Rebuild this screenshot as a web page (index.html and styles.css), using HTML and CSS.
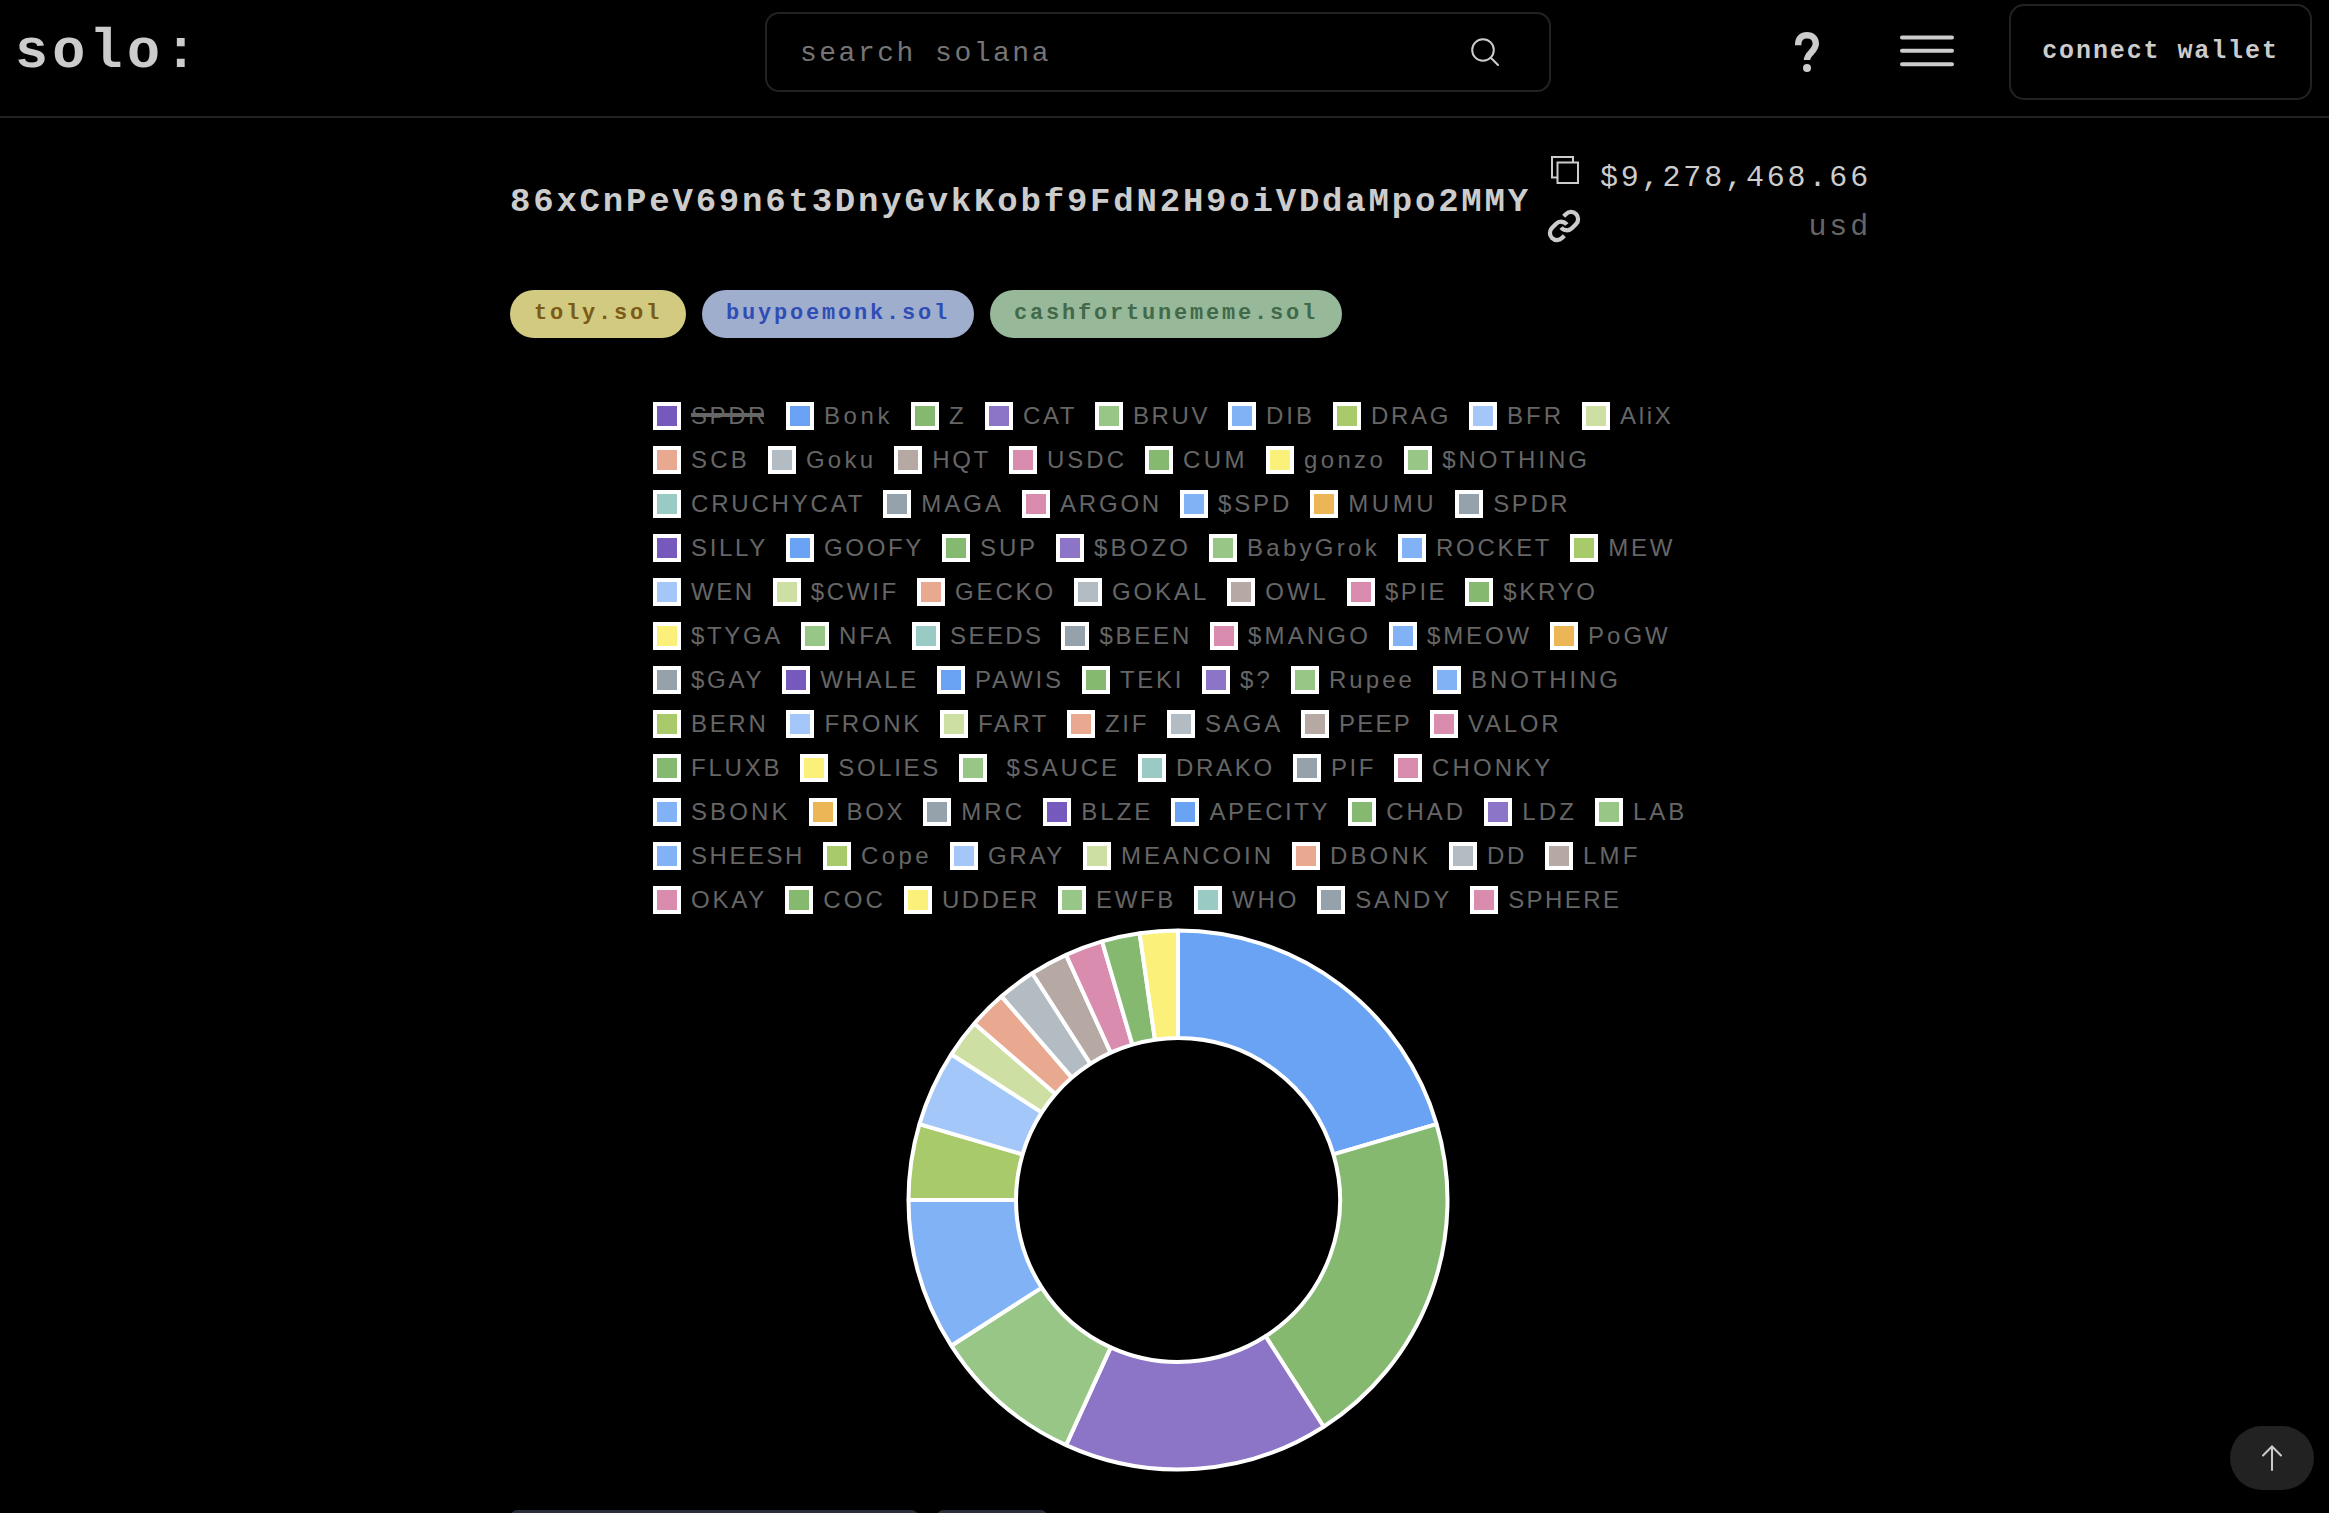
FILE: index.html
```html
<!DOCTYPE html>
<html lang="en">
<head>
<meta charset="utf-8">
<title>solo:</title>
<link rel="stylesheet" href="styles.css">
</head>
<body>
<header class="topbar">
  <a class="logo">solo:</a>
  <div class="search">
    <span class="search-text">search solana</span>
    <svg class="search-icon" width="28" height="28" viewBox="0 0 28 28"><circle cx="12" cy="12" r="10.8"/><path d="M19.8 19.8L27 27"/></svg>
  </div>
  <nav class="actions">
    <svg class="help" width="24" height="40" viewBox="0 0 24 40"><path d="M3.200 13.200V12C3.200 6.500 6.800 3.200 12 3.200s8.800 3.300 8.800 8.600c0 3.600-2 5.800-4.600 8.700C13.600 23.200 12 25 12 28"/><circle cx="12" cy="36" r="4"/></svg>
    <svg class="menu" width="54" height="32" viewBox="0 0 54 32"><path d="M2 2.500H52M2 15.800H52M2 29.200H52"/></svg>
    <button class="wallet">connect wallet</button>
  </nav>
</header>

<main class="page">
  <section class="account">
    <h1 class="address">86xCnPeV69n6t3DnyGvkKobf9FdN2H9oiVDdaMpo2MMY</h1>
    <div class="account-icons">
      <svg class="copy" width="28" height="28" viewBox="0 0 28 28"><path d="M6.500 21.500H1V1H22V6.500M6.500 6.500H27V27H6.500Z"/></svg>
      <svg class="link" width="34" height="34" viewBox="0 0 24 24"><path d="M10 13a5 5 0 0 0 7.540.540l3-3a5 5 0 0 0-7.070-7.070l-1.720 1.710"/><path d="M14 11a5 5 0 0 0-7.540-.540l-3 3a5 5 0 0 0 7.070 7.070l1.710-1.710"/></svg>
    </div>
    <div class="balance">
      <span class="amount">$9,278,468.66</span>
      <span class="unit">usd</span>
    </div>
  </section>

  <section class="domains">
    <span class="pill pill-gold">toly.sol</span>
    <span class="pill pill-blue">buypoemonk.sol</span>
    <span class="pill pill-green">cashfortunememe.sol</span>
  </section>

  <section class="chart">
    <div class="legend" id="legend"></div>
    <svg class="donut" id="donut" width="544" height="544" viewBox="-272 -272 544 544"></svg>
  </section>

  <div class="tabs"><div class="tab tab-wide"></div><div class="tab"></div></div>
</main>

<button class="to-top"><svg width="20" height="26" viewBox="0 0 20 26"><path d="M10 25V2M1 10.500L10 1.500L19 10.500"/></svg></button>
<script src="main.js"></script>
</body>
</html>
```
FILE: styles.css
```css
* { box-sizing: border-box; }

body {
  margin: 0;
  height: 1513px;
  overflow: hidden;
  background: #000;
  color: #ccc;
  font-family: "Liberation Mono", "Courier New", monospace;
}

svg { display: block; flex: none; fill: none; stroke: #ccc; }

.topbar {
  display: grid;
  grid-template-columns: 765px 786px 1fr;
  height: 118px;
  border-bottom: 2px solid #222;
}

.logo {
  padding: 20px 0 0 15px;
  font-size: 55px;
  line-height: 66px;
  font-weight: 700;
  letter-spacing: 4.3px;
}

.search {
  display: flex;
  align-items: center;
  justify-content: space-between;
  height: 80px;
  margin-top: 12px;
  padding: 0 50px 0 33px;
  border: 2px solid #222;
  border-radius: 14px;
}

.search-text {
  padding-top: 2px;
  color: #757575;
  font-size: 28px;
  letter-spacing: 2.5px;
}

.search-icon { stroke-width: 2; stroke-linecap: round; }

.actions {
  display: flex;
  justify-content: flex-end;
  padding: 4px 17px 0 0;
}

.help { margin: 28px 81px 0 0; stroke-width: 6.4; }
.help circle { fill: #ccc; stroke: none; }
.menu { margin: 31px 55px 0 0; stroke-width: 4; stroke-linecap: round; }

.wallet {
  width: 303px;
  height: 96px;
  padding: 0 0 1px;
  border: 2px solid #222;
  border-radius: 15px;
  background: none;
  color: #ccc;
  font: 700 25px "Liberation Mono", "Courier New", monospace;
  letter-spacing: 1.9px;
}

.page { width: 1361px; margin-left: 510px; }

.account { display: flex; height: 172px; }

.address {
  width: 1037px;
  margin: 64px 0 0;
  font-size: 34px;
  line-height: 40px;
  letter-spacing: 2.8px;
  white-space: nowrap;
}

.account-icons { width: 48px; padding-top: 38px; }
.copy { margin-left: 4px; stroke-width: 2; }
.link { margin-top: 25px; stroke-width: 3; stroke-linecap: butt; }

.balance {
  display: flex;
  flex-direction: column;
  align-items: flex-end;
  flex: 1;
  padding-top: 36px;
  font-size: 30px;
  line-height: 49px;
  letter-spacing: 2.85px;
}

.unit { color: #666; }

.domains { display: flex; gap: 16px; }

.pill {
  height: 48px;
  padding: 0 24px;
  border-radius: 24px;
  font-size: 22px;
  font-weight: 700;
  line-height: 48px;
  letter-spacing: 2.8px;
}

.pill-gold { background: #d1ca80; color: #7b5b16; }
.pill-blue { background: #a0aecd; color: #304db5; }
.pill-green { background: #97b999; color: #42694a; }

.chart { padding: 64px 0 0 143px; }

.legend {
  font-family: "Liberation Sans", Arial, sans-serif;
  font-size: 24px;
  color: #666;
}

.legend-row { display: flex; height: 44px; }

.legend-item {
  display: flex;
  gap: 10px;
  flex: none;
  line-height: 28px;
  white-space: pre;
}

.swatch {
  width: 28px;
  height: 28px;
  border: 4px solid #fff;
}

.hidden-token { position: relative; }
.hidden-token::after {
  content: "";
  position: absolute;
  left: 0;
  right: 4px;
  top: 11px;
  height: 4px;
  background: #666;
}

.donut {
  margin: -2px 0 0 253px;
  stroke: #fff;
  stroke-width: 4;
}

.tabs { display: flex; gap: 17px; margin-top: 38px; }
.tab { width: 112px; height: 60px; border-radius: 8px; background: #2a2e3b; }
.tab-wide { width: 409px; }

.to-top {
  position: fixed;
  left: 2230px;
  top: 1426px;
  display: flex;
  align-items: center;
  justify-content: center;
  width: 84px;
  height: 64px;
  padding: 0;
  border: 0;
  border-radius: 32px;
  background: #222;
}
.to-top svg { stroke-width: 2; stroke-linecap: round; }
```
FILE: main.js
```js
const C = {
  purple: "#7659bd", blue: "#6aa2f4", green: "#84b96f", violet: "#8c74c7",
  leaf: "#98c686", sky: "#80b2f5", lime: "#a8ca6a", pale: "#a3c7f9",
  tea: "#cddfa3", salmon: "#e9a991", silver: "#b3bbc3", taupe: "#b6a8a3",
  pink: "#da8cae", yellow: "#faf07a", mint: "#99cac4", slate: "#95a1ab",
  amber: "#ecb657"
};

// Each token: name, colour, left edge; the last number is where the row's text ends.
const rows = [
  ["SPDR","purple",653,"Bonk","blue",786,"Z","green",911,"CAT","violet",985,"BRUV","leaf",1095,"DIB","sky",1228,"DRAG","lime",1333,"BFR","pale",1469,"AliX","tea",1582,1671],
  ["SCB","salmon",653,"Goku","silver",768,"HQT","taupe",894.2,"USDC","pink",1009,"CUM","green",1145,"gonzo","yellow",1266,"$NOTHING","leaf",1404.2,1587.4],
  ["CRUCHYCAT","mint",653,"MAGA","slate",883.2,"ARGON","pink",1022,"$SPD","sky",1180,"MUMU","amber",1310.2,"SPDR","slate",1455.2,1567.8],
  ["SILLY","purple",653,"GOOFY","blue",786,"SUP","green",942,"$BOZO","violet",1056,"BabyGrok","leaf",1209,"ROCKET","sky",1398,"MEW","lime",1570.2,1672.8],
  ["WEN","pale",653,"$CWIF","tea",772.7,"GECKO","salmon",917,"GOKAL","silver",1074,"OWL","taupe",1227.2,"$PIE","pink",1347,"$KRYO","green",1465.2,1595.3],
  ["$TYGA","yellow",653,"NFA","leaf",801,"SEEDS","mint",912.1,"$BEEN","slate",1061.4,"$MANGO","pink",1210,"$MEOW","sky",1389,"PoGW","amber",1550,1668.3],
  ["$GAY","slate",653,"WHALE","purple",782.2,"PAWIS","blue",937,"TEKI","green",1082,"$?","violet",1202,"Rupee","leaf",1291,"BNOTHING","sky",1433,1618.4],
  ["BERN","lime",653,"FRONK","pale",786.4,"FART","tea",940,"ZIF","salmon",1067,"SAGA","silver",1167,"PEEP","taupe",1301,"VALOR","pink",1430,1558.8],
  ["FLUXB","green",653,"SOLIES","yellow",800.2," $SAUCE","leaf",959,"DRAKO","mint",1138,"PIF","slate",1293,"CHONKY","pink",1394,1550.9],
  ["SBONK","sky",653,"BOX","amber",808.6,"MRC","slate",923.2,"BLZE","purple",1043.2,"APECITY","blue",1171.4,"CHAD","green",1348.2,"LDZ","violet",1484.2,"LAB","leaf",1595,1684.8],
  ["SHEESH","sky",653,"Cope","lime",823,"GRAY","pale",950,"MEANCOIN","tea",1083,"DBONK","salmon",1292,"DD","silver",1449,"LMF","taupe",1545,1638],
  ["OKAY","pink",653,"COC","green",785.2,"UDDER","yellow",904,"EWFB","leaf",1058,"WHO","mint",1194,"SANDY","slate",1317.2,"SPHERE","pink",1470.2,1619]
];

const legend = document.getElementById("legend");
rows.forEach((row, r) => {
  const line = document.createElement("div");
  line.className = "legend-row";
  legend.append(line);
  for (let i = 0; i < row.length - 1; i += 3) {
    const left = row[i + 2];
    const next = i + 5 < row.length ? row[i + 5] : row[row.length - 1] + 20.5;
    const item = document.createElement("div");
    item.className = "legend-item";
    item.style.width = (next - left) + "px";
    const box = document.createElement("span");
    box.className = "swatch";
    box.style.background = C[row[i + 1]];
    const label = document.createElement("span");
    label.textContent = row[i];
    if (r === 0 && i === 0) label.className = "hidden-token";
    item.append(box, label);
    line.append(item);
    // Spread the letters over the room the label has before the next swatch.
    const natural = label.getBoundingClientRect().width;
    label.style.letterSpacing = ((next - left - 56 - natural) / label.textContent.length) + "px";
  }
});

const slices = [
  [9, "blue"], [9, "green"], [7, "violet"], [4, "leaf"], [4, "sky"], [2, "lime"], [2, "pale"],
  [1, "tea"], [1, "salmon"], [1, "silver"], [1, "taupe"], [1, "pink"], [1, "green"], [1, "yellow"]
];
const total = slices.reduce((s, x) => s + x[0], 0);
const R = 269.5, H = 162;
let at = 0;
const pt = (r, v) => {
  const a = v / total * 2 * Math.PI;
  return (r * Math.sin(a)).toFixed(2) + " " + (-r * Math.cos(a)).toFixed(2);
};
slices.forEach(([n, color]) => {
  const p = document.createElementNS("http://www.w3.org/2000/svg", "path");
  p.setAttribute("d", `M${pt(R, at)}A${R} ${R} 0 0 1 ${pt(R, at + n)}L${pt(H, at + n)}A${H} ${H} 0 0 0 ${pt(H, at)}Z`);
  p.setAttribute("fill", C[color]);
  p.setAttribute("stroke-linejoin", "bevel");
  document.getElementById("donut").append(p);
  at += n;
});
```
